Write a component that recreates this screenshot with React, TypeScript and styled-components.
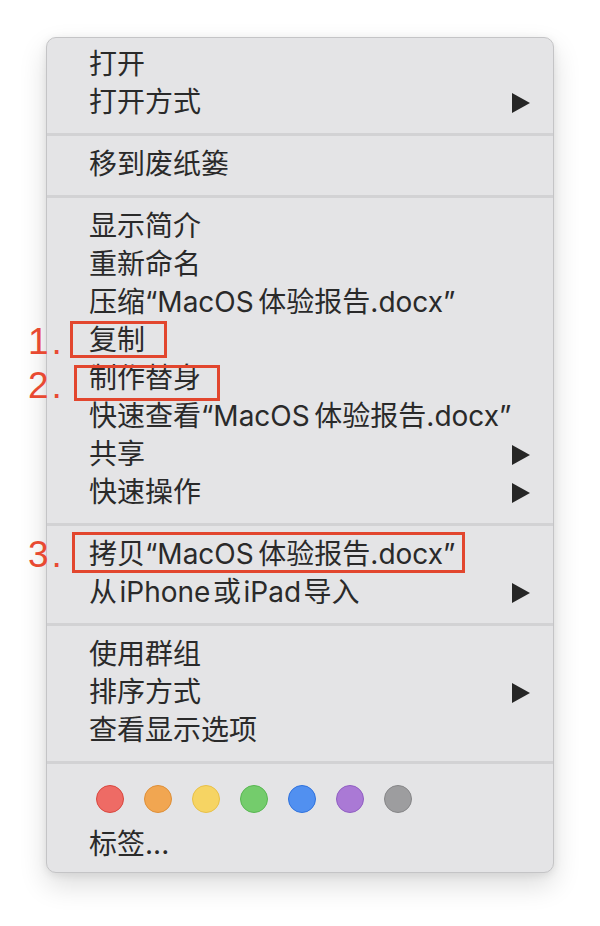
import styled, { createGlobalStyle } from 'styled-components'

const GlobalStyle = createGlobalStyle`
  html, body {
    margin: 0;
    padding: 0;
    background: #ffffff;
  }
`

const Page = styled.div`
  position: relative;
  width: 600px;
  height: 926px;
  box-sizing: border-box;
  padding: 37px 0 0 46px;
  font-family: Inter, 'Noto Sans CJK SC', sans-serif;
`

const Menu = styled.div`
  width: 508px;
  box-sizing: border-box;
  background: #e4e4e6;
  border: 1px solid #c4c4c6;
  border-radius: 10px;
  padding: 8px 0;
  box-shadow: 0 12px 28px rgba(0, 0, 0, 0.14), 0 2px 8px rgba(0, 0, 0, 0.08);
`

const Item = styled.div`
  display: flex;
  align-items: center;
  justify-content: space-between;
  height: 38px;
  padding: 0 23px 0 42px;
  font-size: 28px;
  color: #2a2a2a;
  white-space: nowrap;
`

const Label = styled.span`
  position: relative;
  top: -3px;
`

const Separator = styled.div`
  height: 3px;
  margin: 10.5px 0;
  background: #d2d2d4;
`

const Dots = styled.div`
  display: flex;
  gap: 20px;
  padding: 11px 0 13px 49px;
`

const Dot = styled.span<{ $fill: string; $ring: string }>`
  width: 28px;
  height: 28px;
  box-sizing: border-box;
  border-radius: 50%;
  background: ${(p) => p.$fill};
  border: 1.5px solid ${(p) => p.$ring};
`

const Callout = styled.div<{ $x: number; $y: number; $gap: number }>`
  position: absolute;
  left: ${(p) => p.$x}px;
  top: ${(p) => p.$y}px;
  display: flex;
  align-items: center;
  gap: ${(p) => p.$gap}px;
`

const Number = styled.span`
  font-family: 'Liberation Sans', sans-serif;
  font-size: 37px;
  line-height: 37px;
  letter-spacing: 3px;
  color: #e84a32;
  margin-top: 5px;
`

const Box = styled.div<{ $w: number; $h: number }>`
  width: ${(p) => p.$w}px;
  height: ${(p) => p.$h}px;
  box-sizing: border-box;
  border: 3px solid #e2462e;
`

const Arrow = () => (
  <svg width="18" height="20" viewBox="0 0 18 20">
    <path d="M0 0 L18 10 L0 20 Z" fill="#262626" />
  </svg>
)

const colors = [
  ['#ee6b65', '#d9473f'],
  ['#f1a651', '#de8f38'],
  ['#f6d463', '#e8c048'],
  ['#74cc6c', '#58b752'],
  ['#5190f0', '#2f72dd'],
  ['#aa79d5', '#915ec3'],
  ['#9d9d9f', '#868688'],
]

// narrow gaps like the ones macOS puts between Latin and Chinese text
const doc = '“MacOS\u2006体验报告.docx”'

const groups: { label: string; sub?: boolean }[][] = [
  [{ label: '打开' }, { label: '打开方式', sub: true }],
  [{ label: '移到废纸篓' }],
  [
    { label: '显示简介' },
    { label: '重新命名' },
    { label: '压缩' + doc },
    { label: '复制' },
    { label: '制作替身' },
    { label: '快速查看' + doc },
    { label: '共享', sub: true },
    { label: '快速操作', sub: true },
  ],
  [{ label: '拷贝' + doc }, { label: '从\u200aiPhone\u200a或\u200aiPad\u200a导入', sub: true }],
  [{ label: '使用群组' }, { label: '排序方式', sub: true }, { label: '查看显示选项' }],
]

export default function App() {
  return (
    <Page>
      <GlobalStyle />
      <Menu>
        {groups.map((group, i) => (
          <div key={i}>
            {group.map((item) => (
              <Item key={item.label}>
                <Label>{item.label}</Label>
                {item.sub && <Arrow />}
              </Item>
            ))}
            <Separator />
          </div>
        ))}
        <Dots>
          {colors.map(([fill, ring]) => (
            <Dot key={fill} $fill={fill} $ring={ring} />
          ))}
        </Dots>
        <Item>
          <Label>标签...</Label>
        </Item>
      </Menu>

      <Callout $x={28} $y={318} $gap={5}>
        <Number>1.</Number>
        <Box $w={97} $h={37} />
      </Callout>
      <Callout $x={28} $y={362} $gap={9}>
        <Number>2.</Number>
        <Box $w={146} $h={36} />
      </Callout>
      <Callout $x={28} $y={531} $gap={7}>
        <Number>3.</Number>
        <Box $w={393} $h={41} />
      </Callout>
    </Page>
  )
}
